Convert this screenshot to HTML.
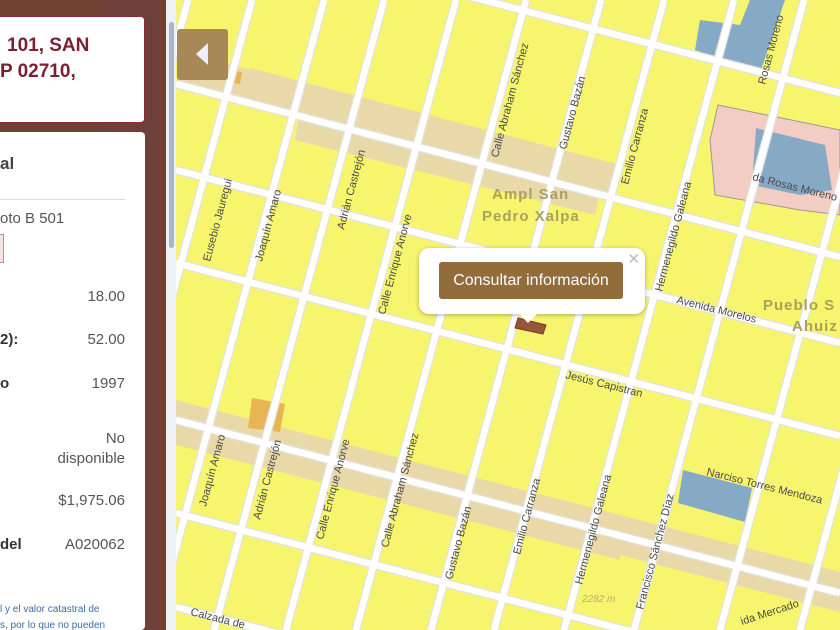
<!DOCTYPE html>
<html><head><meta charset="utf-8"><style>
html,body{margin:0;width:840px;height:630px;overflow:hidden}
body{position:relative;font-family:"Liberation Sans",sans-serif;background:#f7f56e}
#left{position:absolute;left:0;top:0;width:166px;height:630px;background:#714233;overflow:hidden}
#sb{position:absolute;left:166px;top:0;width:10px;height:630px;background:#eef1f5}
#thumb{position:absolute;left:169px;top:22px;width:5px;height:226px;background:#a9b6c6;border-radius:3px}
.card1{position:absolute;left:-6px;top:16px;width:149px;height:105px;background:#fff;border:1px solid #8a2b3c;border-radius:4px}
.card2{position:absolute;left:-6px;top:132px;width:151px;height:498px;background:#fff;border-radius:4px}
.t1{position:absolute;left:0;color:#7b2032;font-weight:bold;font-size:19px;white-space:nowrap}
.lab{position:absolute;left:0;font-weight:bold;color:#333;font-size:15px}
.val{position:absolute;width:125px;text-align:right;color:#555;font-size:15px;left:6px}
#btn{position:absolute;left:177px;top:29px;width:51px;height:51px;background:#a98857;border-radius:3px}
#pop{position:absolute;left:419px;top:248px;width:226px;height:66px;background:#fff;border-radius:10px;box-shadow:0 1px 4px rgba(0,0,0,.3)}
#pop .b{position:absolute;left:20px;top:14px;width:184px;height:37px;background:#936c3c;border-radius:3px;color:#fff;font-size:16px;line-height:37px;text-align:center}
#pop .x{position:absolute;right:5px;top:2px;color:#bbb;font-size:15px}
#pop:after{content:"";position:absolute;left:100px;bottom:-9px;border:9px solid transparent;border-top-color:#fff;border-bottom:0}
svg text{font-family:"Liberation Sans",sans-serif}
</style></head><body>
<svg width="840" height="630" style="position:absolute;left:0;top:0">
<rect width="840" height="630" fill="#f7f56e"/>
<g fill="#e9d9a9">
<polygon points="176,400 840,572 840,612 176,440"/>
<polygon points="176,428 620,545 620,560 176,445"/>
<polygon points="250,68 620,165 610,200 240,105"/>
<polygon points="300,110 600,190 595,215 295,140"/>
<polygon points="180,50 250,70 245,100 178,85"/>
</g>
<polygon points="252,398 285,404 280,432 248,428" fill="#e8b454"/>
<polygon points="228,70 242,72 240,84 226,82" fill="#e8b454"/>
<polygon points="718,105 840,130 840,215 800,210 715,195 710,140" fill="#f3cdc3" stroke="#999" stroke-width="1"/>
<polygon points="756,128 825,145 832,190 800,195 752,185" fill="#86aac6"/>
<polygon points="700,20 740,25 750,0 785,0 760,73 695,50" fill="#86aac6"/>
<polygon points="683,470 752,488 745,522 678,503" fill="#86aac6"/>
<g stroke="#e2e2e2" stroke-width="9" fill="none">
<line x1="176" y1="-80" x2="840" y2="93"/>
<line x1="176" y1="84" x2="840" y2="257"/>
<line x1="176" y1="170" x2="840" y2="343"/>
<line x1="176" y1="263" x2="840" y2="436"/>
<line x1="176" y1="420" x2="840" y2="593"/>
<line x1="176" y1="513" x2="840" y2="686"/>
<line x1="176" y1="607" x2="840" y2="780"/>
<line x1="18" y1="630" x2="188" y2="0"/>
<line x1="82" y1="630" x2="252" y2="0"/>
<line x1="154" y1="630" x2="324" y2="0"/>
<line x1="214" y1="630" x2="384" y2="0"/>
<line x1="286" y1="630" x2="456" y2="0"/>
<line x1="356" y1="630" x2="526" y2="0"/>
<line x1="431" y1="630" x2="601" y2="0"/>
<line x1="494" y1="630" x2="664" y2="0"/>
<line x1="564" y1="630" x2="734" y2="0"/>
<line x1="634" y1="630" x2="804" y2="0"/>
<line x1="720" y1="630" x2="890" y2="0"/>
<line x1="800" y1="630" x2="970" y2="0"/>
</g>
<g stroke="#fff" stroke-width="6.5" fill="none">
<line x1="176" y1="-80" x2="840" y2="93"/>
<line x1="176" y1="84" x2="840" y2="257"/>
<line x1="176" y1="170" x2="840" y2="343"/>
<line x1="176" y1="263" x2="840" y2="436"/>
<line x1="176" y1="420" x2="840" y2="593"/>
<line x1="176" y1="513" x2="840" y2="686"/>
<line x1="176" y1="607" x2="840" y2="780"/>
<line x1="18" y1="630" x2="188" y2="0"/>
<line x1="82" y1="630" x2="252" y2="0"/>
<line x1="154" y1="630" x2="324" y2="0"/>
<line x1="214" y1="630" x2="384" y2="0"/>
<line x1="286" y1="630" x2="456" y2="0"/>
<line x1="356" y1="630" x2="526" y2="0"/>
<line x1="431" y1="630" x2="601" y2="0"/>
<line x1="494" y1="630" x2="664" y2="0"/>
<line x1="564" y1="630" x2="734" y2="0"/>
<line x1="634" y1="630" x2="804" y2="0"/>
<line x1="720" y1="630" x2="890" y2="0"/>
<line x1="800" y1="630" x2="970" y2="0"/>
</g>
<polygon points="518,318 546,325 543,334 515,328" fill="#94573a" stroke="#7b3b2a"/>
<g fill="#4a4a4a" font-size="11">
<text transform="translate(210,262) rotate(-75)">Eusebio Jauregui</text>
<text transform="translate(262,262) rotate(-75)">Joaquín Amaro</text>
<text transform="translate(344,230) rotate(-75)">Adrián Castrejón</text>
<text transform="translate(385,315) rotate(-75)">Calle Enrique Anorve</text>
<text transform="translate(498,158) rotate(-75)">Calle Abraham Sánchez</text>
<text transform="translate(566,150) rotate(-75)">Gustavo Bazán</text>
<text transform="translate(628,185) rotate(-75)">Emilio Carranza</text>
<text transform="translate(662,292) rotate(-75)">Hermenegildo Galeana</text>
<text transform="translate(206,507) rotate(-75)">Joaquín Amaro</text>
<text transform="translate(260,520) rotate(-75)">Adrián Castrejón</text>
<text transform="translate(323,540) rotate(-75)">Calle Enrique Anorve</text>
<text transform="translate(388,548) rotate(-75)">Calle Abraham Sánchez</text>
<text transform="translate(452,580) rotate(-75)">Gustavo Bazán</text>
<text transform="translate(520,555) rotate(-75)">Emilio Carranza</text>
<text transform="translate(582,585) rotate(-75)">Hermenegildo Galeana</text>
<text transform="translate(643,610) rotate(-75)">Francisco Sánchez Díaz</text>
<text transform="translate(765,85) rotate(-75)">Rosas Moreno</text>
<text transform="translate(676,303) rotate(14)">Avenida Morelos</text>
<text transform="translate(565,378) rotate(14)">Jesús Capistran</text>
<text transform="translate(706,475) rotate(14)">Narciso Torres Mendoza</text>
<text transform="translate(190,615) rotate(14)">Calzada de</text>
<text transform="translate(742,625) rotate(-18)">ida Mercado</text>
<text transform="translate(752,180) rotate(14)">da Rosas Moreno</text>
</g>
<g fill="#aaa15c" font-weight="bold" font-size="15" letter-spacing="1">
<text x="492" y="199">Ampl San</text>
<text x="482" y="221">Pedro Xalpa</text>
<text x="763" y="310">Pueblo S</text>
<text x="792" y="331">Ahuiz</text>
</g>
<text x="582" y="602" fill="#b8b070" font-size="10" font-style="italic">2282 m</text>
</svg>
<div id="left">
<div style="position:absolute;left:100px;top:0;width:60px;height:630px;background:#6a3d3f;opacity:.5"></div>
<div class="card1">
<div class="t1" style="top:18px;left:12px">101, SAN</div>
<div class="t1" style="top:44px;left:5px">P 02710,</div>
</div>
<div class="card2">
<div class="lab" style="top:22px;font-size:17px;left:6px;color:#444">al</div>
<div style="position:absolute;left:6px;top:67px;width:125px;border-top:1px solid #ddd"></div>
<div style="position:absolute;left:6px;top:78px;font-size:15px;color:#555">oto B 501</div>
<div style="position:absolute;left:0;top:102px;width:8px;height:27px;border:1px solid #c88;background:#f6e4e4"></div>
<div class="val" style="top:156px">18.00</div>
<div class="lab" style="top:199px;left:6px">2):</div><div class="val" style="top:199px">52.00</div>
<div class="lab" style="top:243px;left:6px">o</div><div class="val" style="top:243px">1997</div>
<div class="val" style="top:297px;line-height:20px">No<br>disponible</div>
<div class="val" style="top:360px">$1,975.06</div>
<div class="lab" style="top:404px;left:6px">del</div><div class="val" style="top:404px">A020062</div>
<div style="position:absolute;left:6px;top:470px;font-size:10px;color:#3b6ea8;line-height:16px;white-space:nowrap">l y el valor catastral de<br>s, por lo que no pueden</div>
</div>
</div>
<div id="sb"></div><div id="thumb"></div>
<div id="btn"><div style="position:absolute;left:19px;top:14px;border-right:12px solid #eef;border-top:11px solid transparent;border-bottom:11px solid transparent"></div></div>
<div id="pop"><div class="b">Consultar información</div><div class="x">✕</div></div>
</body></html>
